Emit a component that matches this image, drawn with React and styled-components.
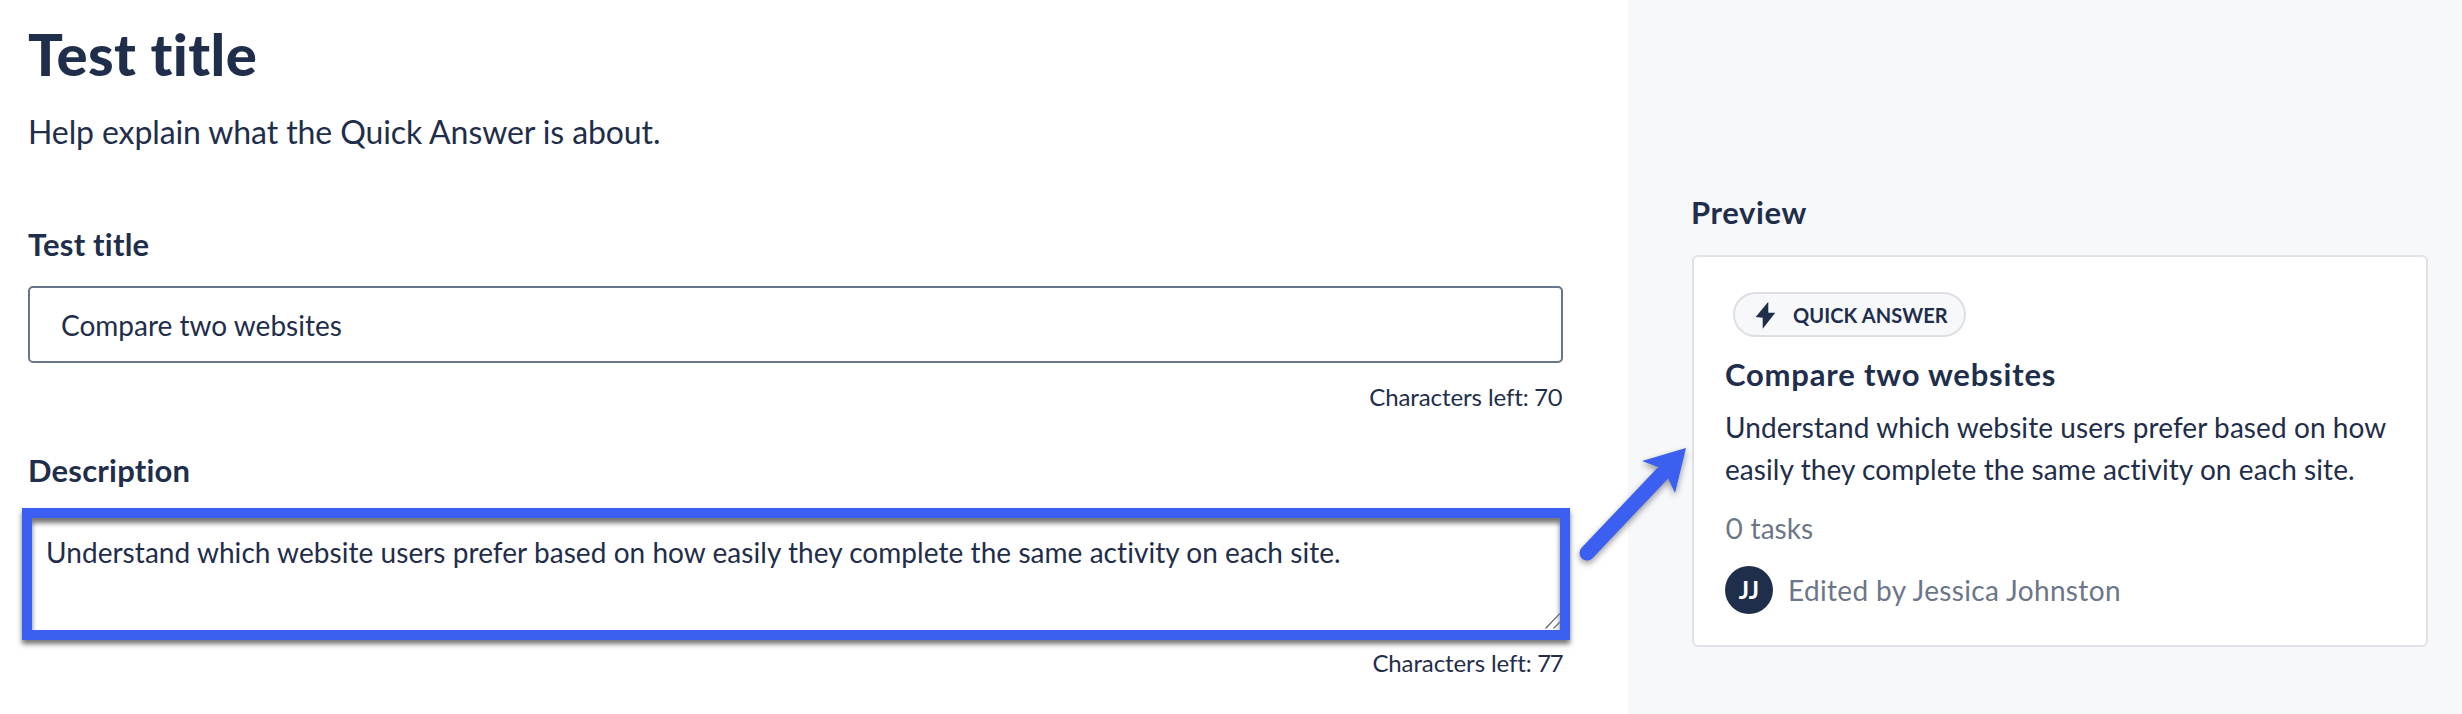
import React from 'react'
import styled, { createGlobalStyle } from 'styled-components'

const GlobalStyle = createGlobalStyle`
html, body {
  margin: 0;
  padding: 0;
  background: #ffffff;
}
body {
  font-family: "Lato", "Open Sans", sans-serif;
  font-variant-ligatures: none;
  font-variant-numeric: proportional-nums;
  color: #1f2e4a;
}
* {
  box-sizing: border-box;
}
`

const Page = styled.div`
position: relative;
display: flex;
width: 2462px;
height: 714px;
overflow: hidden;
`

const Main = styled.div`
width: 1628px;
padding: 19px 65px 0 28px;
`

const Title = styled.h1`
margin: 0;
font-size: 58px;
line-height: 70px;
font-weight: 900;
letter-spacing: 0.4px;
`

const Subtitle = styled.p`
margin: 21px 0 70px;
font-size: 32px;
line-height: 44px;
font-weight: 400;
letter-spacing: -0.1px;
`

const Label = styled.label`
display: block;
margin-bottom: ${props => props.$gap}px;
font-size: 31px;
line-height: 40px;
font-weight: 700;
letter-spacing: 0.2px;
`

const TitleInput = styled.input`
display: block;
width: 100%;
height: 77px;
padding: 0 31px;
border: 2px solid #66758a;
border-radius: 5px;
background: #ffffff;
outline: none;
font-family: inherit;
font-variant-ligatures: none;
font-size: 28px;
color: #1f2e4a;
`

const DescriptionWrap = styled.div`
position: relative;
width: 1548px;
height: 132px;
margin-left: -6px;
`

const DescriptionInput = styled.textarea`
display: block;
width: 100%;
height: 100%;
padding: 16px 14px;
border: 10px solid #3b5ff0;
background: #ffffff;
outline: none;
box-shadow: 0 4px 5px rgba(0, 0, 0, 0.55), inset 0 5px 5px rgba(0, 0, 0, 0.55);
font-family: inherit;
font-variant-ligatures: none;
font-size: 28px;
line-height: 36px;
letter-spacing: 0.05px;
color: #1f2e4a;
resize: none;
`

const ResizeGrip = styled.svg`
position: absolute;
right: 10px;
bottom: 11px;
`

const Counter = styled.div`
margin: ${props => props.$top}px 0 ${props => props.$bottom}px;
text-align: right;
font-size: 24px;
line-height: 32px;
letter-spacing: -0.1px;
`

const Sidebar = styled.aside`
width: 834px;
padding: 192px 34px 0 64px;
background: #f7f8fa;
`

const PreviewLabel = styled.h2`
margin: 0 0 23px -1px;
font-size: 31px;
line-height: 40px;
font-weight: 700;
letter-spacing: 0.6px;
`

const Card = styled.section`
height: 392px;
padding: 35px 31px 0;
border: 2px solid #dfe1e6;
border-radius: 6px;
background: #ffffff;
`

const Pill = styled.div`
display: inline-flex;
align-items: center;
gap: 17px;
height: 45px;
margin-left: 8px;
padding: 0 16px 0 20px;
border: 2px solid #dddfe4;
border-radius: 23px;
background: #f7f8fa;
font-size: 20px;
font-weight: 700;
letter-spacing: 0.1px;
vertical-align: top;
`

const CardTitle = styled.h3`
margin: 17px 0 12px;
font-size: 31px;
line-height: 40px;
font-weight: 700;
letter-spacing: 0.8px;
`

const CardText = styled.p`
margin: 0 0 20px;
font-size: 28px;
line-height: 42px;
letter-spacing: 0.08px;
`

const Tasks = styled.div`
margin-bottom: 20px;
font-size: 28px;
line-height: 36px;
color: #6b7689;
`

const Editor = styled.div`
display: flex;
align-items: center;
gap: 15px;
font-size: 28px;
line-height: 42px;
letter-spacing: 0.35px;
color: #6b7689;
`

const Avatar = styled.div`
display: flex;
align-items: center;
justify-content: center;
width: 48px;
height: 48px;
border-radius: 50%;
background: #1f2e4a;
color: #ffffff;
font-size: 24px;
font-weight: 700;
letter-spacing: 0;
`

const Arrow = styled.svg`
position: absolute;
left: 1570px;
top: 436px;
filter: drop-shadow(0 3px 3px rgba(0, 0, 0, 0.4));
`

function BoltIcon() {
  return (
    <svg width="21" height="28" viewBox="0 0 21 28">
      <polygon points="13.3,0.7 0.7,16 7.7,16.7 7.7,27.7 20.3,11.7 13.3,11.7" fill="#1f2e4a" />
    </svg>
  )
}

function App() {
  return (
    <Page>
      <GlobalStyle />
      <Main>
        <Title>Test title</Title>
        <Subtitle>Help explain what the Quick Answer is about.</Subtitle>
        <Label $gap={22}>Test title</Label>
        <TitleInput readOnly value="Compare two websites" />
        <Counter $top={18} $bottom={37}>Characters left: 70</Counter>
        <Label $gap={18}>Description</Label>
        <DescriptionWrap>
          <DescriptionInput
            readOnly
            value="Understand which website users prefer based on how easily they complete the same activity on each site."
          />
          <ResizeGrip width="15" height="16" viewBox="0 0 15 16">
            <path d="M0.5 15.5 L15 0.5 M8.5 15.5 L15 9" stroke="#666666" strokeWidth="1.2" fill="none" />
          </ResizeGrip>
        </DescriptionWrap>
        <Counter $top={7} $bottom={0}>Characters left: 77</Counter>
      </Main>
      <Sidebar>
        <PreviewLabel>Preview</PreviewLabel>
        <Card>
          <Pill>
            <BoltIcon />
            QUICK ANSWER
          </Pill>
          <CardTitle>Compare two websites</CardTitle>
          <CardText>Understand which website users prefer based on how easily they complete the same activity on each site.</CardText>
          <Tasks>0 tasks</Tasks>
          <Editor>
            <Avatar>JJ</Avatar>
            Edited by Jessica Johnston
          </Editor>
        </Card>
      </Sidebar>
      <Arrow width="130" height="135" viewBox="0 0 130 135">
        <line x1="17" y1="117" x2="92" y2="38" stroke="#3b5ff0" strokeWidth="15" strokeLinecap="round" />
        <polygon points="116,12 72,25 88,31 98,42 105,57" fill="#3b5ff0" />
      </Arrow>
    </Page>
  )
}

export default App
